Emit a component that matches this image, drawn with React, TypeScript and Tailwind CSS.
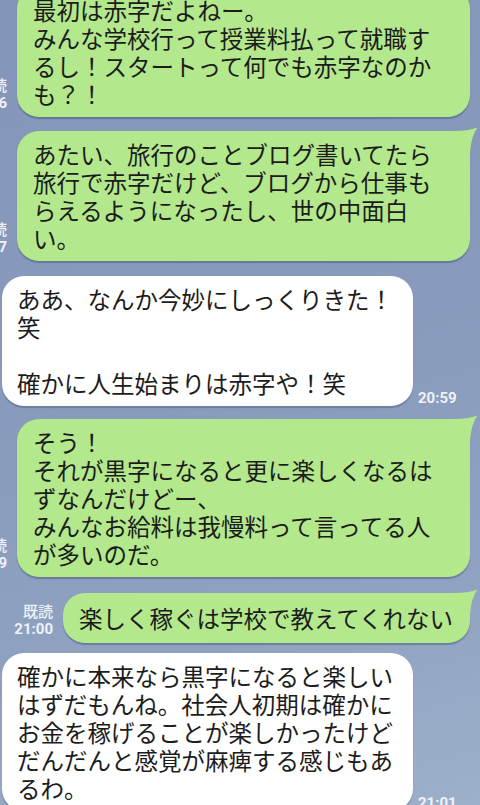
import type { ReactNode } from "react";

type Sent = {
  kind: "sent";
  read: string;
  lines: string[];
  width: string;
  tail?: boolean;
  mt: string;
  py: string;
};

type Recv = {
  kind: "recv";
  time: string;
  lines: string[];
  mt: string;
};

const messages: (Sent | Recv)[] = [
  {
    kind: "sent",
    read: "20:56",
    width: "w-[453px]",
    mt: "mt-[-13px]",
    py: "py-[9px]",
    lines: [
      "最初は赤字だよねー。",
      "みんな学校行って授業料払って就職す",
      "るし！スタートって何でも赤字なのか",
      "も？！",
    ],
  },
  {
    kind: "sent",
    read: "20:57",
    width: "w-[453px]",
    tail: true,
    mt: "mt-[14px]",
    py: "py-[9px]",
    lines: [
      "あたい、旅行のことブログ書いてたら",
      "旅行で赤字だけど、ブログから仕事も",
      "らえるようになったし、世の中面白",
      "い。",
    ],
  },
  {
    kind: "recv",
    time: "20:59",
    mt: "mt-[15px]",
    lines: ["ああ、なんか今妙にしっくりきた！", "笑", "", "確かに人生始まりは赤字や！笑"],
  },
  {
    kind: "sent",
    read: "20:59",
    width: "w-[453px]",
    tail: true,
    mt: "mt-[13px]",
    py: "py-[9px]",
    lines: [
      "そう！",
      "それが黒字になると更に楽しくなるは",
      "ずなんだけどー、",
      "みんなお給料は我慢料って言ってる人",
      "が多いのだ。",
    ],
  },
  {
    kind: "sent",
    read: "21:00",
    width: "w-[407px]",
    tail: true,
    mt: "mt-[16px]",
    py: "py-[11px]",
    lines: ["楽しく稼ぐは学校で教えてくれない"],
  },
  {
    kind: "recv",
    time: "21:01",
    mt: "mt-[10px]",
    lines: [
      "確かに本来なら黒字になると楽しい",
      "はずだもんね。社会人初期は確かに",
      "お金を稼げることが楽しかったけど",
      "だんだんと感覚が麻痺する感じもあ",
      "るわ。",
    ],
  },
];

function Lines({ lines }: { lines: string[] }) {
  return (
    <>
      {lines.map((l, i) => (
        <div key={i} className="h-[28px] leading-[28px] whitespace-nowrap">
          {l}
        </div>
      ))}
    </>
  );
}

function GreenTail() {
  return (
    <svg
      className="absolute right-[-8px] top-[-4px]"
      width="30"
      height="26"
      viewBox="0 0 30 26"
    >
      <path d="M0 4 Q20 4.5 29.5 0.5 Q23 9 22 26 L0 26 Z" fill="#b3e88c" />
    </svg>
  );
}

function Meta({ children }: { children: ReactNode }) {
  return (
    <div className="shrink-0 flex flex-col items-end mb-[5px] text-[#eef2f8] whitespace-nowrap leading-[18px]">
      {children}
    </div>
  );
}

function SentRow({ m }: { m: Sent }) {
  return (
    <div className={`flex justify-end items-end gap-[10px] pr-[10px] ${m.mt}`}>
      <Meta>
        <span className="text-[15px] font-medium">既読</span>
        <span className="text-[15px] font-bold font-[family-name:Roboto,sans-serif]">{m.read}</span>
      </Meta>
      <div
        className={`relative shrink-0 rounded-[22px] bg-[#b3e88c] shadow-[0_1.5px_1px_rgba(40,60,90,0.35)] px-[16px] ${m.py} ${m.width}`}
      >
        {m.tail && <GreenTail />}
        <div className="relative">
          <Lines lines={m.lines} />
        </div>
      </div>
    </div>
  );
}

function RecvRow({ m }: { m: Recv }) {
  return (
    <div className={`flex items-end gap-[5px] pl-[2px] ${m.mt}`}>
      <div className="shrink-0 w-[411px] rounded-[22px] bg-white shadow-[0_1.5px_1px_rgba(40,60,90,0.3)] px-[15px] py-[9px]">
        <Lines lines={m.lines} />
      </div>
      <span className="mb-[-3px] text-[15px] font-bold text-[#eef2f8] font-[family-name:Roboto,sans-serif]">
        {m.time}
      </span>
    </div>
  );
}

export default function App() {
  return (
    <div className="w-[480px] h-[805px] overflow-hidden bg-[linear-gradient(165deg,#8395b9_0%,#899bbc_45%,#8fa2c1_75%,#9db0ca_100%)] font-[family-name:'Noto_Sans_CJK_JP',sans-serif] text-[23.5px] text-[#1c1c1c]">
      <div className="flex flex-col">
        {messages.map((m, i) =>
          m.kind === "sent" ? <SentRow key={i} m={m} /> : <RecvRow key={i} m={m} />
        )}
      </div>
    </div>
  );
}
